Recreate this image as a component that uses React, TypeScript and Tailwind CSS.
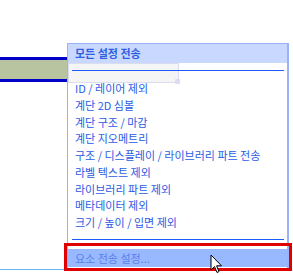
import React from "react";

const items = [
  "ID / 레이어 제외",
  "계단 2D 심볼",
  "계단 구조 / 마감",
  "계단 지오메트리",
  "구조 / 디스플레이 / 라이브러리 파트 전송",
  "라벨 텍스트 제외",
  "라이브러리 파트 제외",
  "메타데이터 제외",
  "크기 / 높이 / 입면 제외",
];

export default function App() {
  return (
    <div
      className="relative w-[293px] h-[275px] bg-white overflow-hidden"
      style={{ fontFamily: '"Noto Sans CJK KR", "Noto Sans", sans-serif' }}
    >
      {/* background content */}
      <div className="flex flex-col">
        <div className="h-[57px]" />
        <div className="h-[25px] w-[120px] border-y-[3px] border-[#0000c8] bg-[#b8c4a0]" />
        <div className="h-[187px]" />
        <div className="h-px w-[64px] bg-[#66b4f4]" />
      </div>

      {/* menu */}
      <div className="absolute left-[67px] top-[43px] w-[222px] h-[226px] bg-white border-l border-t border-[#98b4f8] border-r-2 flex flex-col">
        <div className="h-[19px] bg-[#c8d8ff] pl-[7px] text-[11px] leading-[19px] font-bold text-[#2f5fe0]">
          모든 설정 전송
        </div>
        <div className="relative h-[17px]">
          {/* drag ghost */}
          <div className="absolute left-0 top-0 w-[111px] h-[20px] bg-[#f5f5f5] border border-[#dcdcf0]" />
          <div className="absolute left-[107px] top-[16px] w-[5px] h-[5px] rounded-[1px] bg-[#dcdcf0]" />
          <div className="absolute left-[4px] right-[3px] top-[7px] h-px bg-[#1e5cff]" />
        </div>
        <div className="relative flex flex-col">
          {items.map((t) => (
            <div
              key={t}
              className="h-[16.75px] pl-[7px] text-[11px] leading-[16.75px] text-[#2b5be4] whitespace-nowrap"
            >
              {t}
            </div>
          ))}
        </div>
        <div className="relative h-[18px]">
          <div className="absolute left-[4px] right-[3px] top-[8px] h-px bg-[#1e5cff]" />
        </div>
        <div className="h-[18px] bg-[#98b8ff] pl-[7px] text-[11px] leading-[18px] text-[#5a80e8] whitespace-nowrap">
          요소 전송 설정...
        </div>
      </div>

      {/* red highlight box */}
      <div className="absolute left-[64px] top-[243px] w-[228px] h-[28px] border-[3px] border-[#e00000]" />

      {/* cursor */}
      <svg
        className="absolute left-[210px] top-[254px]"
        width="14"
        height="21"
        viewBox="0 0 14 21"
      >
        <path
          d="M1 1 L1 16 L4.5 12.5 L7 18.5 L9 17.6 L6.6 11.8 L11.5 11.8 Z"
          fill="white"
          stroke="black"
          strokeWidth="1"
          strokeLinejoin="miter"
        />
      </svg>
    </div>
  );
}
